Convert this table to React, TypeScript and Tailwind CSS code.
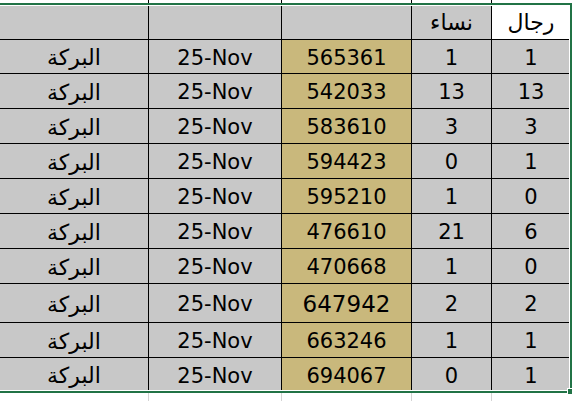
const rows = [
  { name: "البركة", date: "25-Nov", id: "565361", women: "1", men: "1", h: "h-[34px]" },
  { name: "البركة", date: "25-Nov", id: "542033", women: "13", men: "13", h: "h-[35px]" },
  { name: "البركة", date: "25-Nov", id: "583610", women: "3", men: "3", h: "h-[35px]" },
  { name: "البركة", date: "25-Nov", id: "594423", women: "0", men: "1", h: "h-[35px]" },
  { name: "البركة", date: "25-Nov", id: "595210", women: "1", men: "0", h: "h-[35px]" },
  { name: "البركة", date: "25-Nov", id: "476610", women: "21", men: "6", h: "h-[35px]" },
  { name: "البركة", date: "25-Nov", id: "470668", women: "1", men: "0", h: "h-[35px]" },
  { name: "البركة", date: "25-Nov", id: "647942", women: "2", men: "2", h: "h-[39px]", big: true },
  { name: "البركة", date: "25-Nov", id: "663246", women: "1", men: "1", h: "h-[35px]" },
  { name: "البركة", date: "25-Nov", id: "694067", women: "0", men: "1", h: "h-[34px]" },
];

const cols = "grid grid-cols-[149px_133px_130px_80px_79px] grid-rows-[minmax(0,1fr)]";
const cell = "flex items-center justify-center border-r border-b border-black pt-[3px] leading-none overflow-hidden";

export default function App() {
  return (
    <div className="relative w-[572px] h-[401px] overflow-hidden bg-white font-['DejaVu_Sans',sans-serif] text-[21px] text-black">
      {/* sliver of the row above */}
      <div className={`${cols} h-[3px]`}>
        <div className="border-r border-black" />
        <div className="border-r border-black" />
        <div className="border-r border-black" />
        <div className="border-r border-black" />
        <div />
      </div>

      {/* header */}
      <div className={`${cols} h-[37px]`}>
        <div className={`${cell} bg-[#c8c8c8]`} />
        <div className={`${cell} bg-[#c8c8c8]`} />
        <div className={`${cell} bg-[#c8c8c8]`} />
        <div className={`${cell} bg-[#c8c8c8] text-[22px]`}>نساء</div>
        <div className={`${cell} bg-white text-[22px]`}>رجال</div>
      </div>

      {rows.map((r, i) => (
        <div key={i} className={`${cols} ${r.h}`}>
          <div className={`${cell} bg-[#c8c8c8] text-[22px]`}>{r.name}</div>
          <div className={`${cell} bg-[#c8c8c8]`}>{r.date}</div>
          <div className={`${cell} bg-[#c9b87c] ${r.big ? "text-[23px]" : ""}`}>{r.id}</div>
          <div className={`${cell} bg-[#c8c8c8]`}>{r.women}</div>
          <div className={`${cell} bg-[#c8c8c8]`}>{r.men}</div>
        </div>
      ))}

      {/* empty sheet below */}
      <div className={`${cols} h-[20px]`}>
        <div className="border-r border-[#d4d4d4]" />
        <div className="border-r border-[#d4d4d4]" />
        <div className="border-r border-[#d4d4d4]" />
        <div className="border-r border-[#d4d4d4]" />
        <div />
      </div>

      {/* selection frame */}
      <div className="absolute left-[-4px] top-[3px] w-[576px] h-[390px] border-2 border-[#217346]">
        <div className="absolute inset-0 border border-white" />
      </div>
      <div className="absolute left-[567px] top-[388px] w-[6px] h-[7px] bg-[#217346] border border-white" />
    </div>
  );
}
